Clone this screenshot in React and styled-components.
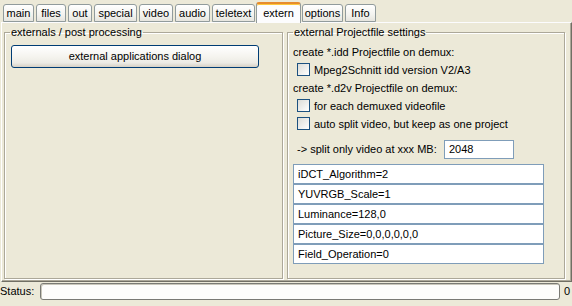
import React from 'react';
import styled, { createGlobalStyle } from 'styled-components';

const GlobalStyle = createGlobalStyle`
  html, body {
    margin: 0;
    padding: 0;
    background: #ece9d8;
  }
  body {
    font-family: "Liberation Sans", Arial, sans-serif;
    font-size: 11px;
    color: #000;
  }
`;

const Frame = styled.div`
  width: 572px;
  height: 306px;
  display: flex;
  flex-direction: column;
  background: #ece9d8;
  overflow: hidden;
`;

const TabBar = styled.div`
  height: 22px;
  display: flex;
  align-items: flex-end;
  gap: 2px;
  padding-left: 3px;
  position: relative;
  z-index: 1;
`;

const Tab = styled.div`
  box-sizing: border-box;
  width: ${p => p.$w}px;
  height: ${p => (p.$active ? 21 : 18)}px;
  margin: 0 ${p => (p.$active ? -1 : 0)}px ${p => (p.$active ? -1 : 0)}px;
  display: flex;
  align-items: center;
  justify-content: center;
  line-height: 13px;
  padding-top: 1px;
  border: 1px solid #919b9c;
  border-bottom: ${p => (p.$active ? 'none' : '1px solid #919b9c')};
  border-top: ${p => (p.$active ? '2px solid #e68b2c' : '1px solid #919b9c')};
  border-radius: 3px 3px 0 0;
  box-shadow: ${p => (p.$active ? 'inset 0 1px 0 #ffc83c' : 'none')};
  background: ${p =>
    p.$active ? '#fcfcfe' : 'linear-gradient(#ffffff, #f3f3ef 60%, #e6e5de)'};
  white-space: nowrap;
`;

const Pane = styled.div`
  box-sizing: border-box;
  margin-left: 1px;
  width: 571px;
  height: 260px;
  display: flex;
  gap: 4px;
  padding: 3px 6px 3px 2px;
  border-top: 1px solid #fcfcfe;
  border-left: 1px solid #ffffff;
  border-right: 1px solid #716f64;
  border-bottom: 1px solid #716f64;
  box-shadow: inset -1px -1px 0 #aca899;
`;

const GroupBox = styled.fieldset`
  box-sizing: border-box;
  margin: 0;
  padding: 0 ${p => p.$padRight}px 0 ${p => p.$padLeft}px;
  width: ${p => (p.$w ? `${p.$w}px` : 'auto')};
  flex: ${p => (p.$w ? 'none' : '1')};
  height: 253px;
  border: 1px solid #aca899;
  border-radius: 0;
  box-shadow: 1px 1px 0 #fff, inset 1px 1px 0 #fff;
  display: flex;
  flex-direction: column;
`;

const Legend = styled.legend`
  padding: 0 1px;
  line-height: 13px;
  margin-left: ${p => p.$shift || 0}px;
`;

const WideButton = styled.button`
  box-sizing: border-box;
  margin-top: 6px;
  width: 248px;
  height: 23px;
  border: 1px solid #003c74;
  border-radius: 3px;
  background: linear-gradient(#ffffff, #f5f4ef 50%, #ecebe5 80%, #d6d0c5);
  font: inherit;
  color: #000;
  padding: 0;
`;

const TextRow = styled.div`
  height: 18px;
  display: flex;
  align-items: center;
  margin-top: ${p => p.$mt || 0}px;
  white-space: nowrap;
`;

const CheckRow = styled.label`
  height: 18px;
  display: flex;
  align-items: center;
  gap: 4px;
  padding-left: 4px;
  white-space: nowrap;
`;

const Box = styled.span`
  box-sizing: border-box;
  width: 13px;
  height: 13px;
  border: 1px solid #1c5180;
  background: linear-gradient(135deg, #dcdcd7, #ffffff);
  flex: none;
`;

const SplitRow = styled.div`
  margin-top: 7px;
  height: 19px;
  display: flex;
  align-items: center;
  padding-left: 4px;
  white-space: nowrap;
`;

const SplitLabel = styled.span`
  width: 147px;
  flex: none;
`;

const NumField = styled.div`
  box-sizing: border-box;
  width: 70px;
  height: 19px;
  border: 1px solid #7f9db9;
  background: #fff;
  display: flex;
  align-items: center;
  padding-left: 4px;
`;

const FieldList = styled.div`
  margin-top: 5px;
  width: 251px;
  display: flex;
  flex-direction: column;
`;

const Field = styled.div`
  box-sizing: border-box;
  height: 20px;
  border: 1px solid #7f9db9;
  background: #fff;
  display: flex;
  align-items: center;
  padding-left: 4px;
`;

const StatusBar = styled.div`
  height: 24px;
  display: flex;
  align-items: flex-start;
  padding-top: 1px;
`;

const StatusLabel = styled.span`
  width: 40px;
  flex: none;
  line-height: 17px;
`;

const StatusField = styled.div`
  box-sizing: border-box;
  width: 520px;
  height: 17px;
  border: 1px solid #7a7a74;
  border-radius: 3px;
  background: #fdfdfb;
  box-shadow: inset 1px 1px 0 #c9c7ba;
`;

const StatusValue = styled.span`
  margin-left: 4px;
  line-height: 17px;
`;

const tabs = [
  ['main', 31],
  ['files', 30],
  ['out', 24],
  ['special', 43],
  ['video', 34],
  ['audio', 35],
  ['teletext', 43],
  ['extern', 45],
  ['options', 41],
  ['Info', 31],
];

const params = [
  'iDCT_Algorithm=2',
  'YUVRGB_Scale=1',
  'Luminance=128,0',
  'Picture_Size=0,0,0,0,0,0',
  'Field_Operation=0',
];

const Check = ({ children }) => (
  <CheckRow>
    <Box />
    {children}
  </CheckRow>
);

export default function App() {
  return (
    <Frame>
      <GlobalStyle />
      <TabBar>
        {tabs.map(([name, w]) => (
          <Tab key={name} $w={w} $active={name === 'extern'}>
            {name}
          </Tab>
        ))}
      </TabBar>
      <Pane>
        <GroupBox $w={279} $padLeft={6} $padRight={6}>
          <Legend $shift={-1}>externals / post processing</Legend>
          <WideButton>external applications dialog</WideButton>
        </GroupBox>
        <GroupBox $padLeft={5} $padRight={5}>
          <Legend>external Projectfile settings</Legend>
          <TextRow $mt={4}>create *.idd Projectfile on demux:</TextRow>
          <Check>Mpeg2Schnitt idd version V2/A3</Check>
          <TextRow>create *.d2v Projectfile on demux:</TextRow>
          <Check>for each demuxed videofile</Check>
          <Check>auto split video, but keep as one project</Check>
          <SplitRow>
            <SplitLabel>-&gt; split only video at xxx MB:</SplitLabel>
            <NumField>2048</NumField>
          </SplitRow>
          <FieldList>
            {params.map(p => (
              <Field key={p}>{p}</Field>
            ))}
          </FieldList>
        </GroupBox>
      </Pane>
      <StatusBar>
        <StatusLabel>Status:</StatusLabel>
        <StatusField />
        <StatusValue>0</StatusValue>
      </StatusBar>
    </Frame>
  );
}
